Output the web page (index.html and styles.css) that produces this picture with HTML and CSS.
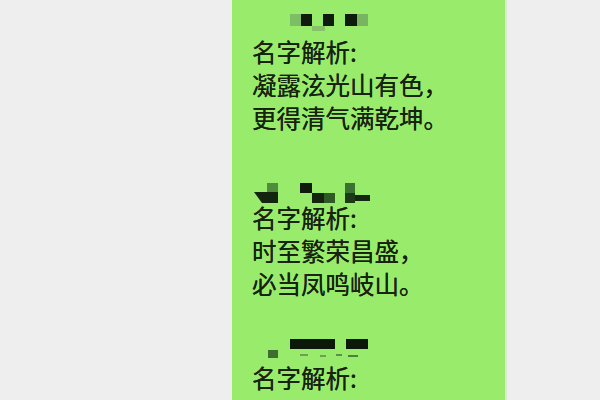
FILE: index.html
```html
<!DOCTYPE html>
<html lang="zh">
<head>
<meta charset="utf-8">
<title>名字解析</title>
<link rel="stylesheet" href="styles.css">
</head>
<body>
<div class="page">
  <div class="bubble">
    <section class="entry">
      <svg class="name" width="140" height="25" viewBox="0 0 140 25" aria-hidden="true">
        <rect x="38" y="4" width="11" height="12" fill="#7dbd64"/>
        <rect x="60" y="16" width="13" height="5" fill="#85c26a"/>
        <rect x="105" y="4" width="11" height="12" fill="#78b560"/>
        <rect x="49" y="4" width="11" height="12" fill="#0f1c0d"/>
        <rect x="71" y="4" width="11" height="12" fill="#0f1c0d"/>
        <rect x="93" y="4" width="12" height="12" fill="#0f1c0d"/>
      </svg>
      <p class="line">名字解析:</p>
      <p class="line">凝露泫光山有色，</p>
      <p class="line">更得清气满乾坤。</p>
    </section>
    <section class="entry">
      <svg class="name" width="140" height="28" viewBox="0 0 140 28" aria-hidden="true">
        <rect x="15" y="10" width="11" height="9" fill="#4f8d3c"/>
        <polygon points="2,19 26,19 26,30 10,30" fill="#13240f"/>
        <rect x="48" y="10" width="12" height="10" fill="#0f1c0d"/>
        <rect x="60" y="20" width="12" height="10" fill="#13240f"/>
        <rect x="72" y="20" width="11" height="10" fill="#2e5a24"/>
        <rect x="93" y="10" width="10" height="10" fill="#3a7230"/>
        <rect x="93" y="20" width="10" height="10" fill="#1d3a17"/>
        <rect x="103" y="22" width="15" height="6" fill="#14280f"/>
      </svg>
      <p class="line">名字解析:</p>
      <p class="line">时至繁荣昌盛，</p>
      <p class="line">必当凤鸣岐山。</p>
    </section>
    <section class="entry">
      <svg class="name" width="140" height="22" viewBox="0 0 140 22" aria-hidden="true">
        <rect x="16" y="11" width="10" height="8" fill="#3d6e30"/>
        <rect x="38" y="0" width="45" height="10" fill="#0c180a"/>
        <rect x="94" y="0" width="22" height="10" fill="#0c180a"/>
        <rect x="48" y="15" width="8" height="2" fill="#6d9f58"/>
        <rect x="68" y="16" width="6" height="2" fill="#6d9f58"/>
        <rect x="84" y="15" width="6" height="2" fill="#5d8f4a"/>
        <rect x="96" y="16" width="10" height="2" fill="#4f7f3e"/>
      </svg>
      <p class="line">名字解析:</p>
      <p class="line">&nbsp;</p>
    </section>
  </div>
</div>
</body>
</html>
```

FILE: styles.css
```css
html, body {
  margin: 0;
  padding: 0;
  background: #eeeeee;
  height: 100%;
  overflow: hidden;
}

.page {
  display: flex;
  height: 400px;
  padding-left: 232px;
}

.bubble {
  width: 253px;
  height: 400px;
  background: #98eb6b;
  padding: 10px 0 0 20px;
  box-shadow: 2px 0 0 #d9ecd2;
  display: flex;
  flex-direction: column;
  gap: 39px;
  overflow: hidden;
  font-family: "Noto Sans CJK SC", "Noto Sans", sans-serif;
  color: #17230f;
}

.entry {
  display: flex;
  flex-direction: column;
}

.name {
  display: block;
  overflow: visible;
}

.line {
  margin: 0;
  font-size: 24.5px;
  line-height: 33px;
  white-space: nowrap;
  text-shadow: 0 0 0.4px #17230f;
}
```
